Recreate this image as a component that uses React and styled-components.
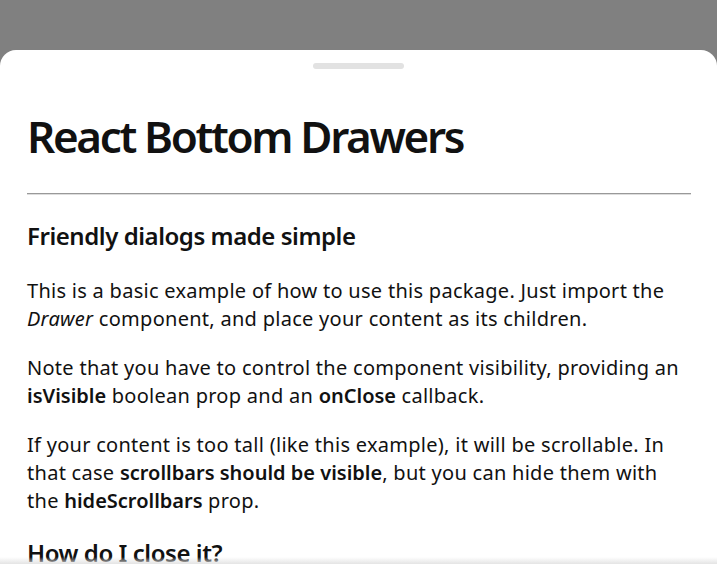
import React from "react";
import styled, { createGlobalStyle } from "styled-components";

const Global = createGlobalStyle`
  html, body { margin: 0; padding: 0; height: 100%; }
  body { font-family: "Noto Sans", "Open Sans", sans-serif; background: #808080; overflow: hidden; }
  #root { height: 100%; }
`;

const Backdrop = styled.div`
  height: 100vh;
  background: #808080;
  display: flex;
  flex-direction: column;
  padding-top: 50px;
  box-sizing: border-box;
`;

const Drawer = styled.div`
  position: relative;
  flex: 1;
  background: #fff;
  border-radius: 16px 16px 0 0;
  overflow: hidden;
  padding-top: 13px;
  display: flex;
  flex-direction: column;
`;

const Handle = styled.div`
  width: 91px;
  height: 6px;
  border-radius: 3px;
  background: #e2e2e2;
  align-self: center;
  flex-shrink: 0;
`;

const Content = styled.div`
  padding: 0 26px 0 27px;
  color: #111;
`;

const Title = styled.h1`
  font-size: 44px;
  font-weight: 600;
  line-height: normal;
  margin: 37px 0 27px;
  letter-spacing: -2.35px;
`;

const Rule = styled.hr`
  margin: 0;
  border: none;
  border-top: 1px solid #999;
  border-bottom: 1px solid #ddd;
`;

const Heading = styled.h2`
  font-size: 24px;
  font-weight: 600;
  line-height: normal;
  margin: ${(p) => (p.$first ? "24px 0 25px" : "0 0 22px")};
  letter-spacing: -0.45px;
`;

const Para = styled.p`
  font-size: 20px;
  line-height: 28px;
  margin: 0 0 21px;
  letter-spacing: 0.28px;
`;

const Strong = styled.b`
  font-weight: 600;
  letter-spacing: 0;
`;

const Fade = styled.div`
  position: absolute;
  left: 0;
  right: 0;
  bottom: 0;
  height: 7px;
  background: linear-gradient(to bottom, rgba(230, 230, 230, 0), rgba(225, 225, 225, 0.9));
  pointer-events: none;
`;

export default function App() {
  return (
    <>
      <Global />
      <Backdrop>
        <Drawer>
          <Handle />
          <Content>
            <Title>React Bottom Drawers</Title>
            <Rule />
            <Heading $first>Friendly dialogs made simple</Heading>
            <Para>
              This is a basic example of how to use this package. Just import the{" "}
              <i>Drawer</i> component, and place your content as its children.
            </Para>
            <Para>
              Note that you have to control the component visibility, providing an{" "}
              <Strong>isVisible</Strong> boolean prop and an <Strong>onClose</Strong> callback.
            </Para>
            <Para>
              If your content is too tall (like this example), it will be scrollable. In
              that case <Strong>scrollbars should be visible</Strong>, but you can hide them with
              the <Strong>hideScrollbars</Strong> prop.
            </Para>
            <Heading>How do I close it?</Heading>
          </Content>
          <Fade />
        </Drawer>
      </Backdrop>
    </>
  );
}
